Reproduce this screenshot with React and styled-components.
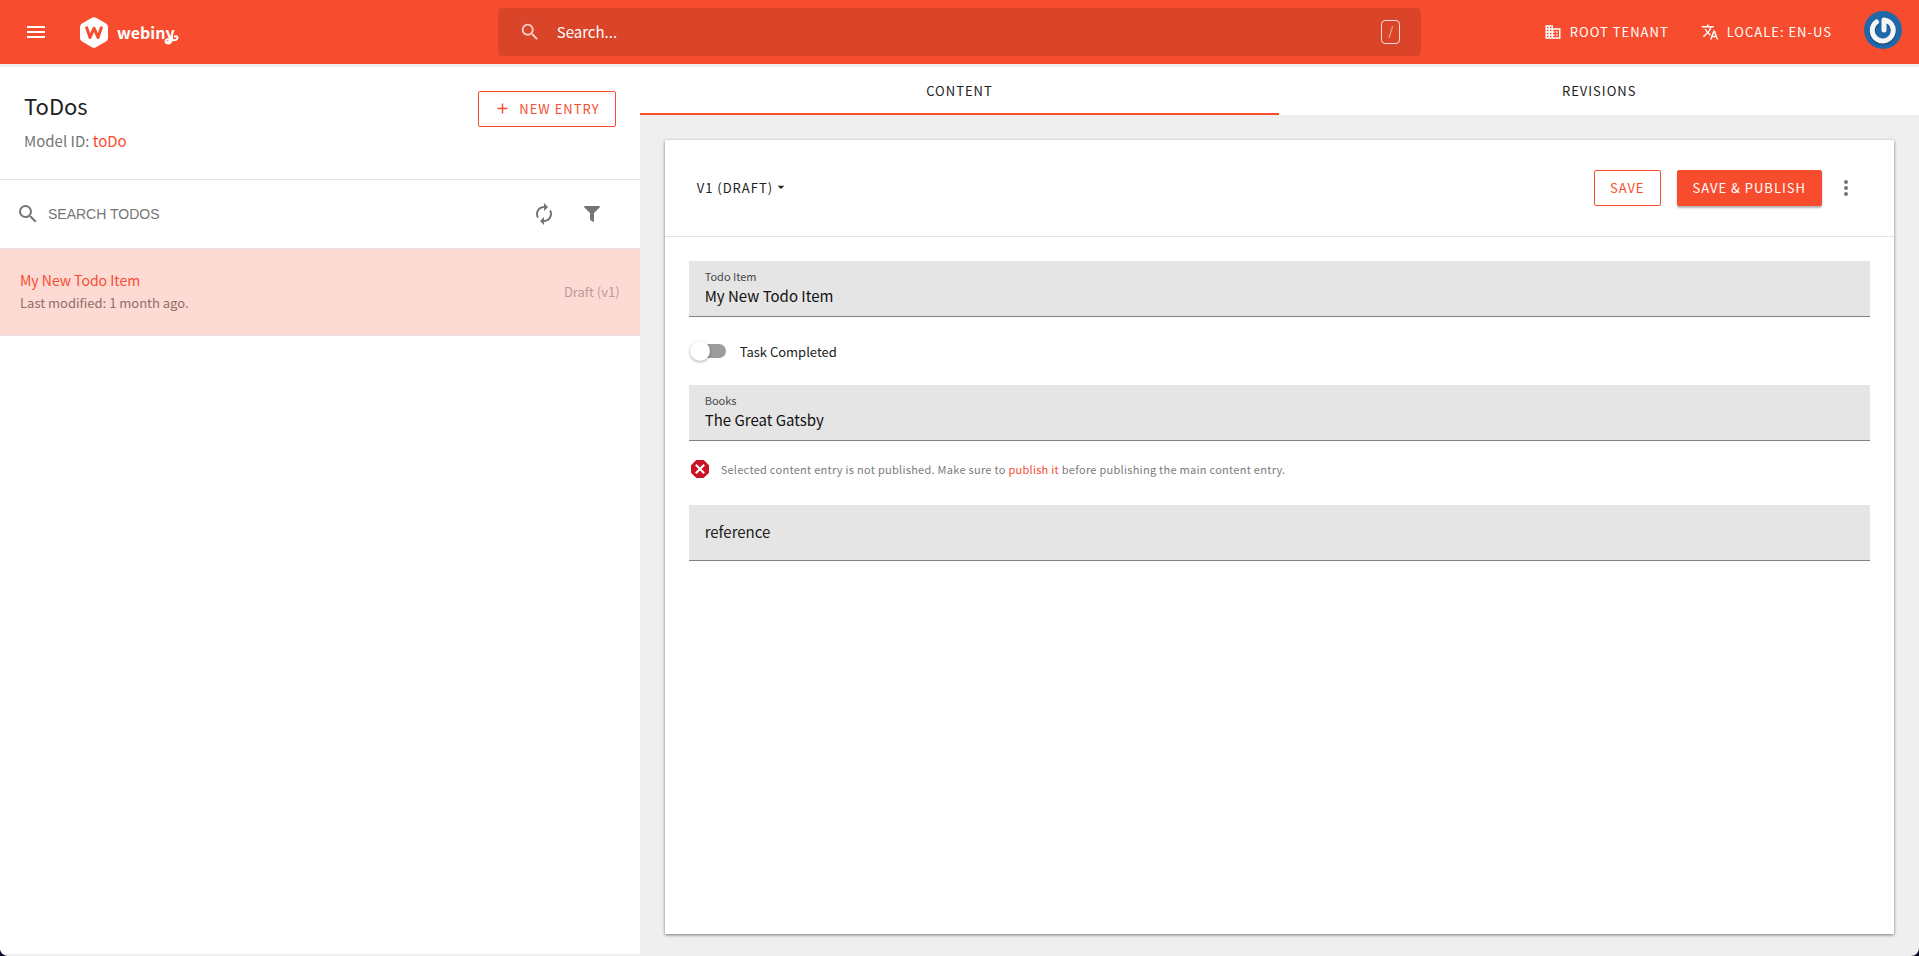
import React, { useState } from "react"
import styled, { createGlobalStyle } from "styled-components"
import { MdAdd, MdArrowDropDown, MdAutorenew, MdBusiness, MdMenu, MdMoreVert, MdSearch, MdTranslate } from "react-icons/md"
import { FaFilter } from "react-icons/fa"

const entries = [
  { id: 1, title: "My New Todo Item", modified: "Last modified: 1 month ago.", status: "Draft (v1)" }
]

const tabs = ["CONTENT", "REVISIONS"]

const Logo = () => (
  <LogoLink href="#home" aria-label="webiny home">
    <svg width="28" height="31" viewBox="0 0 28 31">
      <path d="M12 .8Q14-.4 16 .8L26 6.600Q28 7.800 28 10V21Q28 23.200 26 24.400L16 30.200Q14 31.400 12 30.200L2 24.400Q0 23.200 0 21V10Q0 7.800 2 6.600Z" fill="#fff" />
      <path d="M6.700 10.700 10 20.500 14 11.200 18 20.500 21.300 10.700" fill="none" stroke="#f74d2e" strokeWidth="3" strokeLinejoin="round" strokeLinecap="round" />
    </svg>
    <Wordmark>webiny</Wordmark>
    <Tail width="16" height="11" viewBox="0 0 16 11">
      <path d="M9 1C9.500 5 8.500 9.500 5.500 9.500C2 9.500 1.500 5.800 4.500 5.200C7.500 4.800 11 7.500 13.500 5.500C15.500 3.800 14 1.500 12 2.500" fill="none" stroke="#fff" strokeWidth="2" strokeLinecap="round" />
    </Tail>
  </LogoLink>
)

const Avatar = () => (
  <svg width="38" height="38" viewBox="0 0 38 38">
    <circle cx="19" cy="19" r="19" fill="#1f69ab" />
    <path d="M12.500 11.500A10.500 10.500 0 1 0 25.500 11.500" transform="translate(0 1)" fill="none" stroke="#123f6b" strokeWidth="6" strokeLinecap="round" opacity=".5" />
    <path d="M12.500 11A10.500 10.500 0 1 0 20 9V19" fill="none" stroke="#f6f6f4" strokeWidth="5" strokeLinecap="round" strokeLinejoin="round" />
  </svg>
)

const ErrorIcon = () => (
  <svg width="18" height="18" viewBox="0 0 18 18">
    <path d="M5.300 0H12.700L18 5.300V12.700L12.700 18H5.300L0 12.700V5.300Z" fill="#c81425" />
    <path d="M4.800 4.800 13.200 13.200M13.200 4.800 4.800 13.200" stroke="#fff" strokeWidth="2" />
  </svg>
)

const App = () => {

  const [activeTab, setActiveTab] = useState("CONTENT")
  const [completed, setCompleted] = useState(false)
  const [item, setItem] = useState("My New Todo Item")
  const [book, setBook] = useState("The Great Gatsby")

  return (
    <Page>
      <GlobalStyle />
      <TopBar>
        <BarStart>
          <IconButton aria-label="Menu"><MdMenu size={24} color="#fff" /></IconButton>
          <Logo />
        </BarStart>
        <GlobalSearch>
          <MdSearch size={22} />
          <GlobalInput type="search" aria-label="Search" placeholder="Search..." />
          <Key>/</Key>
        </GlobalSearch>
        <BarEnd>
          <BarButton><MdBusiness size={18} />ROOT TENANT</BarButton>
          <BarButton><MdTranslate size={18} />LOCALE: EN-US</BarButton>
          <AvatarButton aria-label="Account"><Avatar /></AvatarButton>
        </BarEnd>
      </TopBar>

      <Main>
        <ListPanel>
          <ListHeader>
            <div>
              <Title>ToDos</Title>
              <Model>Model ID: <Link href="#model">toDo</Link></Model>
            </div>
            <Button><MdAdd size={17} />NEW ENTRY</Button>
          </ListHeader>
          <ListSearch>
            <MdSearch size={24} />
            <ListInput aria-label="Search todos" placeholder="SEARCH TODOS" />
            <IconButton aria-label="Refresh"><MdAutorenew size={24} /></IconButton>
            <IconButton aria-label="Filter"><FaFilter size={16} /></IconButton>
          </ListSearch>
          <List>
            {entries.map(entry => (
              <Entry key={entry.id}>
                <div>
                  <EntryTitle>{entry.title}</EntryTitle>
                  <EntryDate>{entry.modified}</EntryDate>
                </div>
                <EntryStatus>{entry.status}</EntryStatus>
              </Entry>
            ))}
          </List>
        </ListPanel>

        <Details>
          <Tabs role="tablist">
            {tabs.map(tab => (
              <Tab key={tab} role="tab" aria-selected={tab === activeTab} $active={tab === activeTab} onClick={() => setActiveTab(tab)}>{tab}</Tab>
            ))}
          </Tabs>
          <Card>
            <CardHeader>
              <Revision>V1 (DRAFT)<MdArrowDropDown size={16} /></Revision>
              <Actions>
                <Button>SAVE</Button>
                <Button $filled>SAVE &amp; PUBLISH</Button>
                <IconButton aria-label="More"><MdMoreVert size={24} /></IconButton>
              </Actions>
            </CardHeader>
            <Form>
              <Field>
                <FieldLabel htmlFor="todo-item">Todo Item</FieldLabel>
                <FieldInput id="todo-item" value={item} onChange={e => setItem(e.target.value)} />
              </Field>
              <SwitchRow>
                <Switch type="checkbox" role="switch" checked={completed} onChange={e => setCompleted(e.target.checked)} />
                Task Completed
              </SwitchRow>
              <div>
                <Field>
                  <FieldLabel htmlFor="books">Books</FieldLabel>
                  <FieldInput id="books" value={book} onChange={e => setBook(e.target.value)} />
                </Field>
                <Message>
                  <ErrorIcon />
                  <p>Selected content entry is not published. Make sure to <Link href="#publish">publish it</Link> before publishing the main content entry.</p>
                </Message>
              </div>
              <Field>
                <EmptyLabel htmlFor="reference">reference</EmptyLabel>
                <EmptyInput id="reference" />
              </Field>
            </Form>
          </Card>
        </Details>
      </Main>
    </Page>
  )
}

export default App

const GlobalStyle = createGlobalStyle`
  * {
    box-sizing: border-box;
  }

  body {
    margin: 0;
    background: #0c0820;
    color: #212121;
    font-family: "Noto Sans CJK SC", "Noto Sans", sans-serif;
    font-size: 14px;
  }

  h1, h2, p, ul {
    margin: 0;
    padding: 0;
    font-weight: 400;
  }

  button, input {
    font: inherit;
    color: inherit;
    border: 0;
    padding: 0;
    background: none;
    outline: none;
  }

  button {
    cursor: pointer;
  }

  svg {
    flex: none;
    display: block;
  }
`

const Page = styled.div`
  min-height: 100vh;
  display: flex;
  flex-direction: column;
  background: #efefef;
  border-radius: 0 0 8px 8px;
  overflow: hidden;
`

const TopBar = styled.header`
  display: grid;
  grid-template-columns: 1fr 2fr 1fr;
  height: 64px;
  background: #f74d2e;
  color: #fff;
`

const BarStart = styled.div`
  display: flex;
  align-items: center;
  gap: 22px;
  padding-left: 14px;
`

const IconButton = styled.button`
  display: flex;
  align-items: center;
  justify-content: center;
  width: 44px;
  height: 48px;
  color: #757575;
`

const LogoLink = styled.a`
  display: flex;
  align-items: center;
  color: #fff;
  text-decoration: none;
`

const Wordmark = styled.span`
  margin-left: 9px;
  font-size: 16px;
  font-weight: 700;
  line-height: 24px;
`

const Tail = styled.svg`
  margin: 14px 0 0 -12px;
`

const GlobalSearch = styled.div`
  display: flex;
  align-items: center;
  gap: 16px;
  margin: 8px 18px;
  padding: 0 21px;
  border-radius: 4px;
  background: #da4429;

  > svg {
    opacity: 0.75;
  }
`

const GlobalInput = styled.input`
  flex: 1;
  min-width: 0;
  font-size: 15px;
  line-height: 24px;

  &::placeholder {
    color: #fff;
    opacity: 1;
  }
`

const Key = styled.kbd`
  width: 19px;
  height: 24px;
  border: 1px solid rgba(255, 255, 255, 0.8);
  border-radius: 4px;
  font-family: inherit;
  font-size: 12px;
  line-height: 20px;
  text-align: center;
  color: rgba(255, 255, 255, 0.7);
`

const BarEnd = styled.div`
  display: flex;
  align-items: center;
  justify-content: flex-end;
  padding-right: 17px;
`

const BarButton = styled.button`
  display: flex;
  align-items: center;
  gap: 8px;
  margin-right: 32px;
  font-size: 13px;
  line-height: 24px;
  letter-spacing: 1px;
  white-space: nowrap;
`

const AvatarButton = styled.button`
  margin-bottom: 4px;
`

const Main = styled.main`
  flex: 1;
  display: grid;
  grid-template-columns: 1fr 2fr;
  padding-top: 3px;
`

const ListPanel = styled.section`
  margin-bottom: 2px;
  background: #fff;
`

const ListHeader = styled.div`
  display: flex;
  justify-content: space-between;
  align-items: flex-start;
  padding: 24px 24px 26px;
`

const Title = styled.h1`
  font-size: 22px;
  line-height: 28px;
`

const Model = styled.p`
  margin-top: 10px;
  font-size: 15px;
  line-height: 24px;
  color: #757575;
`

const Link = styled.a`
  color: #f74d2e;
  text-decoration: none;
`

const Button = styled.button`
  display: flex;
  align-items: center;
  gap: 8px;
  height: 36px;
  padding: 0 15px 2px;
  border: 1px solid #f74d2e;
  border-radius: 2px;
  background: ${({ $filled }) => ($filled ? "#f74d2e" : "#fff")};
  color: ${({ $filled }) => ($filled ? "#fff" : "#f74d2e")};
  box-shadow: ${({ $filled }) => ($filled ? "0 2px 2px rgba(0, 0, 0, 0.3)" : "none")};
  font-size: 13px;
  letter-spacing: 1px;
  white-space: nowrap;
`

const ListSearch = styled.div`
  display: flex;
  align-items: center;
  height: 70px;
  padding: 0 26px 0 16px;
  border-top: 1px solid #e2e2e2;
  border-bottom: 1px solid #e2e2e2;
  color: #757575;

  ${IconButton}:last-child {
    margin-left: 4px;
  }
`

const ListInput = styled.input`
  flex: 1;
  min-width: 0;
  margin-left: 8px;
  font-family: "Liberation Sans", Arial, sans-serif;

  &::placeholder {
    color: #757575;
    opacity: 1;
  }
`

const List = styled.ul`
  list-style: none;
`

const Entry = styled.li`
  display: flex;
  align-items: center;
  justify-content: space-between;
  padding: 20px;
  border-bottom: 1px solid #e2e2e2;
  background: #fddad4;
`

const EntryTitle = styled.h2`
  font-size: 14px;
  line-height: 22px;
  color: #f74d2e;
`

const EntryDate = styled.p`
  font-size: 13px;
  line-height: 24px;
  color: #8d6f6b;
`

const EntryStatus = styled.span`
  font-size: 13px;
  line-height: 24px;
  color: #ba9a96;
`

const Details = styled.section`
  display: flex;
  flex-direction: column;
`

const Tabs = styled.div`
  display: flex;
  background: #fff;
`

const Tab = styled.button`
  flex: 1;
  height: 48px;
  padding-top: 2px;
  border-bottom: 2px solid ${({ $active }) => ($active ? "#f74d2e" : "transparent")};
  font-size: 13px;
  line-height: 24px;
  letter-spacing: 1px;
`

const Card = styled.div`
  flex: 1;
  margin: 25px 25px 22px;
  background: #fff;
  box-shadow: 0 1px 3px rgba(0, 0, 0, 0.5);
`

const CardHeader = styled.div`
  display: flex;
  align-items: center;
  justify-content: space-between;
  height: 97px;
  padding: 0 24px 0 32px;
  border-bottom: 1px solid #e2e2e2;
`

const Revision = styled.button`
  display: flex;
  align-items: center;
  padding-bottom: 2px;
  font-size: 13px;
  letter-spacing: 1px;
`

const Actions = styled.div`
  display: flex;
  align-items: center;

  ${Button} {
    margin-left: 16px;
  }

  ${IconButton} {
    width: 48px;
  }
`

const Form = styled.form`
  display: flex;
  flex-direction: column;
  gap: 24px;
  padding: 24px;
`

const Field = styled.div`
  position: relative;
  display: flex;
  flex-direction: column;
  height: 56px;
  padding: 7px 16px 0;
  border-bottom: 1px solid #828282;
  background: #e5e5e5;
`

const FieldLabel = styled.label`
  font-size: 11px;
  line-height: 16px;
  color: #484848;
`

const FieldInput = styled.input`
  width: 100%;
  font-size: 15px;
  line-height: 24px;
  color: #111;
`

const EmptyLabel = styled.label`
  padding-top: 8px;
  font-size: 15px;
  line-height: 24px;
`

/* the empty field's label rests where the value will be typed */
const EmptyInput = styled.input`
  position: absolute;
  inset: 0;
  padding: 0 16px;
`

const SwitchRow = styled.label`
  display: flex;
  align-items: center;
  gap: 14px;
  height: 20px;
  padding-left: 1px;
  font-size: 13px;
`

const Switch = styled.input`
  appearance: none;
  display: flex;
  align-items: center;
  width: 36px;
  height: 14px;
  margin: 0;
  border-radius: 7px;
  background: linear-gradient(#9c9c9c, #9c9c9c) right / 32px 14px no-repeat;

  &::before {
    content: "";
    flex: none;
    width: 20px;
    height: 20px;
    border-radius: 50%;
    background: #fff;
    box-shadow: 0 1px 3px rgba(0, 0, 0, 0.35);
  }

  &:checked::before {
    margin-left: 16px;
  }
`

const Message = styled.div`
  display: flex;
  align-items: center;
  gap: 12px;
  padding: 16px 2px 0;
  font-size: 11px;
  line-height: 24px;
  letter-spacing: 0.025em;
  color: #7c7c7c;
`
